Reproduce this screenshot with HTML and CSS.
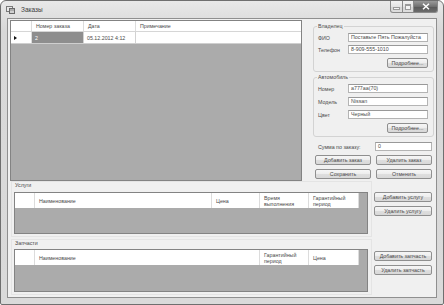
FILE: index.html
```html
<!DOCTYPE html>
<html>
<head>
<meta charset="utf-8">
<title>Заказы</title>
<link rel="stylesheet" href="styles.css">
</head>
<body>
<div class="window">
  <div class="titlebar">
    <svg class="app-icon" viewBox="0 0 9 9">
      <rect x="0.5" y="1.5" width="6" height="5" fill="#e8e8e8" stroke="#7a7a7a"/>
      <rect x="3.5" y="3.5" width="5" height="5" fill="#d0d0d0" stroke="#6a6a6a"/>
      <rect x="4.5" y="4.5" width="1" height="1" fill="#444"/>
      <rect x="6.5" y="4.5" width="1" height="1" fill="#444"/>
    </svg>
    <span class="title">Заказы</span>
    <div class="caption-btns">
      <div class="cbtn min"><span class="min-glyph"></span></div>
      <div class="cbtn max"><span class="max-glyph"></span></div>
      <div class="cbtn close">
        <svg class="x-glyph" viewBox="0 0 8 7"><path d="M1 0.8 L7 6.2 M7 0.8 L1 6.2" stroke="#fff" stroke-width="1.5"/></svg>
      </div>
    </div>
  </div>
  <div class="client">
    <div class="top">
      <div class="grid orders">
        <div class="ghead full">
          <div class="rh"></div>
          <div class="hc w52">Номер заказа</div>
          <div class="hc w52">Дата</div>
          <div class="hc fill">Примечание</div>
        </div>
        <div class="grow">
          <div class="rh"><span class="arrow"></span></div>
          <div class="cell w52 sel">2</div>
          <div class="cell w52">05.12.2012 4:12</div>
          <div class="cell fill"></div>
        </div>
      </div>
      <div class="side">
        <div class="group g1">
          <div class="gtitle">Владелец</div>
          <div class="field"><span class="lbl">ФИО</span><div class="tb">Поставьте Пять Пожалуйста</div></div>
          <div class="field"><span class="lbl">Телефон</span><div class="tb">8-909-555-1010</div></div>
          <div class="btn more">Подробнее...</div>
        </div>
        <div class="group g2">
          <div class="gtitle">Автомобиль</div>
          <div class="field"><span class="lbl">Номер</span><div class="tb">а777аа(70)</div></div>
          <div class="field"><span class="lbl">Модель</span><div class="tb">Nissan</div></div>
          <div class="field"><span class="lbl">Цвет</span><div class="tb">Черный</div></div>
          <div class="btn more">Подробнее...</div>
        </div>
        <div class="sum">
          <span class="sum-lbl">Сумма по заказу:</span>
          <div class="tb sum-tb">0</div>
        </div>
        <div class="btnrow">
          <div class="btn wide">Добавить заказ</div>
          <div class="btn wide">Удалить заказ</div>
        </div>
        <div class="btnrow">
          <div class="btn wide">Сохранить</div>
          <div class="btn wide">Отменить</div>
        </div>
      </div>
    </div>
    <div class="bottom">
      <div class="sect">
        <div class="panel">
          <div class="plabel">Услуги</div>
          <div class="grid services">
            <div class="ghead">
              <div class="rh"></div>
              <div class="hc" style="width:177px">Наименование</div>
              <div class="hc" style="width:48px">Цена</div>
              <div class="hc two" style="width:49px">Время<br>выполнения</div>
              <div class="hc two" style="width:50px">Гарантийный<br>период</div>
            </div>
          </div>
        </div>
        <div class="sbtns s1">
          <div class="btn sbtn">Добавить услугу</div>
          <div class="btn sbtn">Удалить услугу</div>
        </div>
      </div>
      <div class="sect s2">
        <div class="panel">
          <div class="plabel">Запчасти</div>
          <div class="grid parts">
            <div class="ghead">
              <div class="rh"></div>
              <div class="hc" style="width:225px">Наименование</div>
              <div class="hc two" style="width:49px">Гарантийный<br>период</div>
              <div class="hc" style="width:50px">Цена</div>
            </div>
          </div>
        </div>
        <div class="sbtns p1">
          <div class="btn sbtn">Добавить запчасть</div>
          <div class="btn sbtn">Удалить запчасть</div>
        </div>
      </div>
    </div>
  </div>
</div>
</body>
</html>
```
FILE: styles.css
```css
* { box-sizing: border-box; margin: 0; padding: 0; }
html, body { width: 444px; height: 305px; overflow: hidden; background: #fff; }
body {
  font-family: "Liberation Sans", Arial, sans-serif;
  font-size: 5.3px;
  color: #4a4a4a;
}

.window {
  width: 444px;
  height: 305px;
  border: 1px solid #6f6f6f;
  border-radius: 6px 6px 2px 2px;
  background: linear-gradient(#e8e8e8, #d8d8d8 30px, #dadada);
  display: flex;
  flex-direction: column;
}

.titlebar {
  height: 17px;
  display: flex;
  align-items: center;
  padding-left: 5px;
}
.app-icon { width: 9px; height: 9px; margin-right: 6px; }
.title { font-size: 6.5px; color: #3c3c3c; }

.caption-btns {
  margin-left: auto;
  margin-right: 5px;
  align-self: flex-start;
  display: flex;
}
.cbtn {
  height: 12px;
  border: 1px solid #8a8a8a;
  border-top: none;
  display: flex;
  align-items: center;
  justify-content: center;
  background: linear-gradient(#f2f2f2, #e4e4e4 50%, #d4d4d4 51%, #dedede);
}
.min { width: 13px; border-radius: 0 0 0 3px; }
.max { width: 11px; border-left: none; }
.close {
  width: 24px;
  border-left: none;
  border-radius: 0 0 3px 0;
  background: linear-gradient(#9a9a9a, #707070 50%, #585858 51%, #6c6c6c);
}
.min-glyph {
  width: 5px; height: 1px;
  margin-top: 4px;
  background: #f4f4f4;
  border: 1px solid #9a9a9a;
  box-sizing: content-box;
}
.max-glyph {
  width: 4px; height: 3px;
  border: 1px solid #9a9a9a;
  border-top-width: 2px;
  background: #f4f4f4;
  box-sizing: content-box;
}
.x-glyph { width: 8px; height: 7px; }

.client {
  flex: 1;
  margin: 0 6px 6px 6px;
  border: 1px solid #8f8f8f;
  background: #f0f0f0;
  display: flex;
  flex-direction: column;
}

.top {
  display: flex;
  height: 162px;
  padding: 1px 0 0 2px;
}

/* data grids */
.grid {
  border: 1px solid #838383;
  background: #ababab;
  display: flex;
  flex-direction: column;
  align-items: flex-start;
}
.orders { width: 292px; height: 161px; align-items: stretch; }
.services { width: 354px; height: 42px; }
.parts { width: 354px; height: 43px; }

.ghead {
  display: flex;
  background: #fff;
  height: 15px;
}
.ghead.full { height: 11px; border-bottom: 1px solid #d6d6d6; }
.grow {
  display: flex;
  height: 12px;
  background: #fff;
  border-bottom: 1px solid #cfcfcf;
}
.rh {
  width: 20px;
  flex: none;
  border-right: 1px solid #dcdcdc;
  display: flex;
  align-items: center;
  padding-left: 3px;
}
.orders .rh { width: 21px; }
.hc {
  flex: none;
  display: flex;
  align-items: center;
  padding-left: 4px;
  border-right: 1px solid #dcdcdc;
  white-space: nowrap;
}
.hc.two { line-height: 6px; }
.w52 { width: 52px; }
.fill { flex: 1; border-right: none; }
.cell {
  flex: none;
  display: flex;
  align-items: center;
  padding-left: 3px;
  border-right: 1px solid #d2d2d2;
}
.cell.fill { flex: 1; border-right: none; }
.cell.sel { background: #8e8e8e; color: #fff; }
.arrow {
  width: 0; height: 0;
  border-top: 2.5px solid transparent;
  border-bottom: 2.5px solid transparent;
  border-left: 3px solid #111;
}

/* right side */
.side {
  width: 121px;
  margin-left: 11px;
  display: flex;
  flex-direction: column;
}
.group {
  border: 1px solid #d3d3d3;
  border-radius: 3px;
  padding: 0 5px 3px 4px;
  display: flex;
  flex-direction: column;
}
.g1 { margin-top: 6px; }
.g2 { margin-top: 5px; }
.gtitle {
  margin: -5px 0 0 -1px;
  height: 8px;
  line-height: 8px;
  padding: 0 1px;
  background: #f0f0f0;
  align-self: flex-start;
}
.field {
  display: flex;
  align-items: center;
  height: 9px;
  margin-top: 3px;
}
.g2 .field + .field { margin-top: 4px; }
.lbl { width: 30px; flex: none; }
.tb {
  flex: 1;
  height: 9px;
  border: 1px solid #b4b4b4;
  border-top-color: #999;
  background: #fff;
  padding-left: 2px;
  line-height: 7px;
  white-space: nowrap;
  overflow: hidden;
}
.btn {
  border: 1px solid #8f8f8f;
  border-radius: 2px;
  background: linear-gradient(#f6f6f6, #ededed 50%, #dedede 51%, #d8d8d8);
  display: flex;
  align-items: center;
  justify-content: center;
  white-space: nowrap;
}
.more {
  align-self: flex-end;
  width: 41px;
  height: 10px;
  margin-top: 4px;
}
.sum {
  display: flex;
  align-items: center;
  height: 9px;
  margin-top: 5px;
  padding-left: 5px;
}
.sum-lbl { flex: 1; }
.sum-tb { flex: none; width: 57px; margin-right: 2px; }
.btnrow {
  display: flex;
  gap: 5px;
  margin-top: 4px;
  padding-left: 2px;
}
.btn.wide { width: 56px; height: 10px; }

/* bottom sections */
.bottom { padding-left: 3px; display: flex; flex-direction: column; }
.sect { display: flex; }
.s2 { margin-top: 2px; }
.panel {
  width: 361px;
  border: 1px solid #e4e4e4;
  padding: 0 3px 2px 2px;
}
.plabel {
  height: 7px;
  line-height: 7px;
  margin: 0 0 3px 1px;
}
.s2 .plabel { margin-bottom: 2px; }
.sbtns {
  margin-left: 2px;
  width: 58px;
  display: flex;
  flex-direction: column;
  gap: 4px;
}
.s1 { padding-top: 11px; }
.p1 { padding-top: 12px; }
.btn.sbtn { height: 10px; }
```
